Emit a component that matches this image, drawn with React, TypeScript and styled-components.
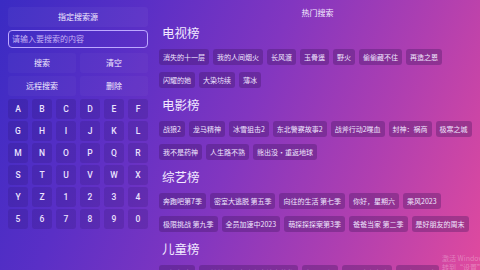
import styled, { createGlobalStyle } from "styled-components";

const GlobalStyle = createGlobalStyle`
  html, body {
    margin: 0;
    padding: 0;
  }
  body {
    font-family: "Noto Sans CJK SC", "Noto Sans", sans-serif;
  }
`;

const Screen = styled.div`
  position: relative;
  width: 480px;
  height: 270px;
  overflow: hidden;
  display: flex;
  flex-direction: row;
  background: linear-gradient(
    112deg,
    #3a2bc3 0%,
    #5a2fc6 25%,
    #8236c0 50%,
    #b03fb0 75%,
    #e04a9e 100%
  );
  color: #f3ecff;
`;

/* left: search panel */

const LeftPanel = styled.div`
  width: 140px;
  flex-shrink: 0;
  padding: 7px 8px 0 8px;
  display: flex;
  flex-direction: column;
`;

const SourceButton = styled.div`
  height: 20px;
  line-height: 20px;
  text-align: center;
  font-size: 8px;
  border-radius: 3px;
  background: rgba(255, 255, 255, 0.04);
`;

const SearchInput = styled.div`
  margin-top: 3px;
  height: 16px;
  border: 1px solid #bda8ff;
  border-radius: 4px;
  padding: 0 3px;
  font-size: 8px;
  line-height: 16px;
  color: #c4b2f4;
`;

const ActionRow = styled.div`
  display: grid;
  grid-template-columns: 1fr 1fr;
  gap: 4px;
  margin-top: ${(p: { $top: number }) => p.$top}px;
`;

const ActionButton = styled.div`
  height: 20px;
  line-height: 20px;
  text-align: center;
  font-size: 8px;
  border-radius: 3px;
  background: rgba(255, 255, 255, 0.03);
`;

const KeyGrid = styled.div`
  margin-top: 3px;
  display: grid;
  grid-template-columns: repeat(6, 20px);
  grid-auto-rows: 20px;
  column-gap: 4px;
  row-gap: 2px;
`;

const Key = styled.div`
  display: flex;
  align-items: center;
  justify-content: center;
  border-radius: 3px;
  background: rgba(30, 10, 80, 0.16);
  font-family: "Roboto", "Noto Sans", sans-serif;
  font-size: 8.5px;
  font-weight: 500;
  color: #ebe2ff;
`;

/* right: hot search lists */

const RightPanel = styled.div`
  flex: 1;
  padding: 5px 0 0 3px;
  display: flex;
  flex-direction: column;
`;

const PanelTitle = styled.div`
  height: 16px;
  line-height: 16px;
  text-align: center;
  font-size: 8px;
  margin-bottom: 2px;
  padding-right: 4px;
`;

const Section = styled.div`
  display: flex;
  flex-direction: column;
  margin-bottom: 7px;
`;

const SectionTitle = styled.div`
  height: 20px;
  line-height: 20px;
  font-size: 12.5px;
  padding-left: 3px;
  color: #f1e8ff;
  margin-bottom: 6px;
`;

const TagList = styled.div`
  display: flex;
  flex-wrap: wrap;
  column-gap: 4px;
  row-gap: 7px;
`;

const Tag = styled.div`
  height: 16px;
  line-height: 16px;
  padding: 0 4px;
  border-radius: 3px;
  font-size: 7px;
  white-space: nowrap;
  color: #f0e6ff;
  background: rgba(60, 20, 90, 0.32);
`;

const Watermark = styled.div`
  position: absolute;
  left: 442px;
  top: 254px;
  font-size: 7px;
  line-height: 9px;
  color: rgba(255, 255, 255, 0.3);
  white-space: nowrap;
  font-family: "Noto Sans CJK SC", sans-serif;
`;

const keys = "ABCDEFGHIJKLMNOPQRSTUVWXYZ1234567890".split("");

const sections = [
  {
    title: "电视榜",
    items: [
      "消失的十一层",
      "我的人间烟火",
      "长风渡",
      "玉骨遥",
      "野火",
      "偷偷藏不住",
      "再造之恩",
      "闪耀的她",
      "大染坊续",
      "薄冰",
    ],
  },
  {
    title: "电影榜",
    items: [
      "战狼2",
      "龙马精神",
      "冰雪狙击2",
      "东北警察故事2",
      "战斧行动2喋血",
      "封神：祸商",
      "极寒之城",
      "我不是药神",
      "人生路不熟",
      "熊出没·重返地球",
    ],
  },
  {
    title: "综艺榜",
    items: [
      "奔跑吧第7季",
      "密室大逃脱 第五季",
      "向往的生活 第七季",
      "你好，星期六",
      "乘风2023",
      "极限挑战 第九季",
      "全员加速中2023",
      "萌探探探案第3季",
      "爸爸当家 第二季",
      "是好朋友的周末",
    ],
  },
  {
    title: "儿童榜",
    items: [
      "小猪佩奇",
      "喜羊羊与灰太狼之奇妙大营救",
      "超级飞侠",
      "汪汪队立大功",
      "海底小纵队",
    ],
  },
];

const App = () => {
  return (
    <>
      <GlobalStyle />
      <Screen>
        <LeftPanel>
          <SourceButton>指定搜索源</SourceButton>
          <SearchInput>请输入要搜索的内容</SearchInput>
          <ActionRow $top={5}>
            <ActionButton>搜索</ActionButton>
            <ActionButton>清空</ActionButton>
          </ActionRow>
          <ActionRow $top={3}>
            <ActionButton>远程搜索</ActionButton>
            <ActionButton>删除</ActionButton>
          </ActionRow>
          <KeyGrid>
            {keys.map((k) => (
              <Key key={k}>{k}</Key>
            ))}
          </KeyGrid>
        </LeftPanel>
        <RightPanel>
          <PanelTitle>热门搜索</PanelTitle>
          {sections.map((s) => (
            <Section key={s.title}>
              <SectionTitle>{s.title}</SectionTitle>
              <TagList>
                {s.items.map((item) => (
                  <Tag key={item}>{item}</Tag>
                ))}
              </TagList>
            </Section>
          ))}
        </RightPanel>
        <Watermark>
          激活 Windows
          <br />
          转到“设置”以激活 Windows。
        </Watermark>
      </Screen>
    </>
  );
};

export default App;
